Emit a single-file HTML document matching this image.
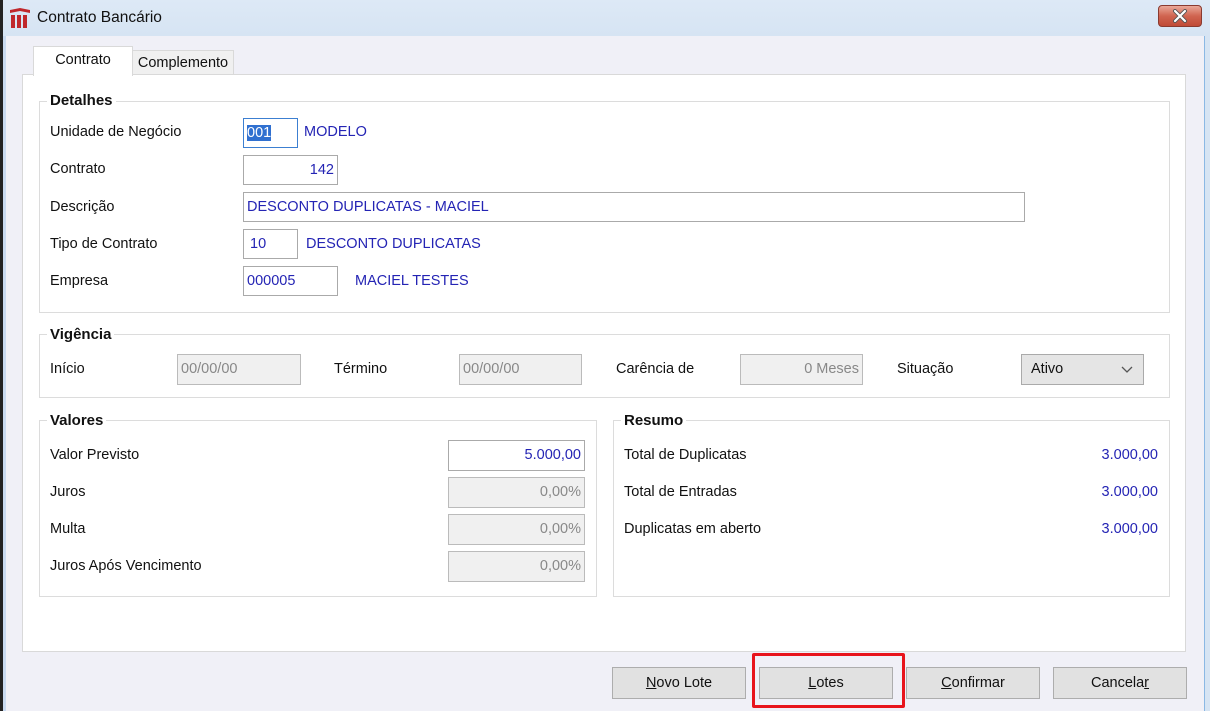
<!DOCTYPE html>
<html><head><meta charset="utf-8"><style>
*{box-sizing:border-box;margin:0;padding:0}
body{width:1210px;height:711px;position:relative;overflow:hidden;background:#f0f0f7;font-family:"Liberation Sans",sans-serif;font-size:14.5px;color:#111}
.a{position:absolute}
.title{left:0;top:0;width:1210px;height:36px;background:linear-gradient(#dde9f6,#d6e4f3)}
.lf{left:0;top:0;width:3px;height:711px;background:#222}
.lf2{left:3px;top:36px;width:3px;height:675px;background:#c9daf0}
.rf{left:1204px;top:36px;width:6px;height:675px;background:#d6e4f3;border-left:1px solid #8ab8e4}
.panel{left:22px;top:74px;width:1164px;height:578px;background:#fff;border:1px solid #d9d9d9}
.tab{background:#f0f0f0;border:1px solid #d9d9d9;text-align:center}
.grp{border:1px solid #dcdcdc}
.gt{background:#fff;font-weight:bold;padding:0 3px;font-size:15px}
.in{border:1px solid #aaa;background:#fff;color:#2424b4;padding:0 3px;line-height:28px;height:30px;font-size:14.5px}
.dis{background:#f0f0f0;color:#888;border-color:#bbb}
.r{text-align:right}
.blue{color:#2424b4}
.btn{top:667px;width:134px;height:32px;background:#e1e1e1;border:1px solid #adadad;text-align:center;line-height:30px;font-size:14.5px}
</style></head><body>
<div class="a title"></div>
<div class="a lf"></div><div class="a lf2"></div><div class="a rf"></div>
<svg class="a" style="left:9px;top:7px" width="22" height="22" viewBox="0 0 22 22"><path d="M1 3 L11 1 L21 3 L21 6 L11 4 L1 6Z M2 8h4v13H2z M8 8h4v13H8z M14 8h4v13h-4z" fill="#c0282c"/></svg>
<div class="a" style="left:37px;top:9px;font-size:15.5px">Contrato Bancário</div>
<div class="a" style="left:1158px;top:5px;width:44px;height:22px;border:1px solid #8a3a2f;border-radius:4px;background:linear-gradient(#eaa898,#d06450 50%,#c04a36)"></div>
<svg class="a" style="left:1172px;top:9px" width="16" height="14" viewBox="0 0 16 14"><path d="M3 2 L13 12 M13 2 L3 12" stroke="#555" stroke-width="4" stroke-linecap="round"/><path d="M3 2 L13 12 M13 2 L3 12" stroke="#fff" stroke-width="2.2" stroke-linecap="round"/></svg>
<div class="a" style="left:6px;top:36px;width:1198px;height:675px;background:#f0f0f7"></div>
<div class="a panel"></div>
<div class="a tab" style="left:132px;top:50px;width:102px;height:25px;line-height:24px">Complemento</div>
<div class="a tab" style="left:33px;top:46px;width:100px;height:30px;background:#fff;border-bottom:none;line-height:26px">Contrato</div>

<div class="a grp" style="left:39px;top:101px;width:1131px;height:212px"></div>
<div class="a gt" style="left:47px;top:92px">Detalhes</div>
<div class="a" style="left:50px;top:124px">Unidade de Negócio</div>
<div class="a in" style="left:243px;top:118px;width:55px;border-color:#3c7fd1"><span style="background:#3070d0;color:#fff">001</span></div>
<div class="a blue" style="left:304px;top:124px">MODELO</div>
<div class="a" style="left:50px;top:161px">Contrato</div>
<div class="a in r" style="left:243px;top:155px;width:95px">142</div>
<div class="a" style="left:50px;top:199px">Descrição</div>
<div class="a in" style="left:243px;top:192px;width:782px">DESCONTO DUPLICATAS - MACIEL</div>
<div class="a" style="left:50px;top:236px">Tipo de Contrato</div>
<div class="a in" style="left:243px;top:229px;width:55px;padding-left:6px">10</div>
<div class="a blue" style="left:306px;top:236px">DESCONTO DUPLICATAS</div>
<div class="a" style="left:50px;top:273px">Empresa</div>
<div class="a in" style="left:243px;top:266px;width:95px">000005</div>
<div class="a blue" style="left:355px;top:273px">MACIEL TESTES</div>

<div class="a grp" style="left:39px;top:334px;width:1131px;height:64px"></div>
<div class="a gt" style="left:47px;top:326px">Vigência</div>
<div class="a" style="left:50px;top:361px">Início</div>
<div class="a in dis" style="left:177px;top:354px;width:124px;height:31px">00/00/00</div>
<div class="a" style="left:334px;top:361px">Término</div>
<div class="a in dis" style="left:459px;top:354px;width:123px;height:31px">00/00/00</div>
<div class="a" style="left:616px;top:361px">Carência de</div>
<div class="a in dis r" style="left:740px;top:354px;width:123px;height:31px">0 Meses</div>
<div class="a" style="left:897px;top:361px">Situação</div>
<div class="a in" style="left:1021px;top:354px;width:123px;height:31px;background:#e5e5e5;color:#111;padding-left:9px">Ativo<svg style="position:absolute;right:10px;top:11px" width="12" height="8" viewBox="0 0 12 8"><path d="M1 1 L6 6 L11 1" stroke="#555" stroke-width="1.3" fill="none"/></svg></div>

<div class="a grp" style="left:39px;top:420px;width:558px;height:177px"></div>
<div class="a gt" style="left:47px;top:412px">Valores</div>
<div class="a" style="left:50px;top:447px">Valor Previsto</div>
<div class="a in r" style="left:448px;top:440px;width:137px;height:31px">5.000,00</div>
<div class="a" style="left:50px;top:484px">Juros</div>
<div class="a in dis r" style="left:448px;top:477px;width:137px;height:31px">0,00%</div>
<div class="a" style="left:50px;top:521px">Multa</div>
<div class="a in dis r" style="left:448px;top:514px;width:137px;height:31px">0,00%</div>
<div class="a" style="left:50px;top:558px">Juros Após Vencimento</div>
<div class="a in dis r" style="left:448px;top:551px;width:137px;height:31px">0,00%</div>

<div class="a grp" style="left:613px;top:420px;width:557px;height:177px"></div>
<div class="a gt" style="left:621px;top:412px">Resumo</div>
<div class="a" style="left:624px;top:447px">Total de Duplicatas</div>
<div class="a blue" style="left:1060px;top:447px;width:98px;text-align:right">3.000,00</div>
<div class="a" style="left:624px;top:484px">Total de Entradas</div>
<div class="a blue" style="left:1060px;top:484px;width:98px;text-align:right">3.000,00</div>
<div class="a" style="left:624px;top:521px">Duplicatas em aberto</div>
<div class="a blue" style="left:1060px;top:521px;width:98px;text-align:right">3.000,00</div>

<div class="a btn" style="left:612px"><u>N</u>ovo Lote</div>
<div class="a btn" style="left:759px"><u>L</u>otes</div>
<div class="a btn" style="left:906px"><u>C</u>onfirmar</div>
<div class="a btn" style="left:1053px">Cancela<u>r</u></div>
<div class="a" style="left:752px;top:653px;width:153px;height:55px;border:3px solid #e8141c;border-radius:2px"></div>
</body></html>
